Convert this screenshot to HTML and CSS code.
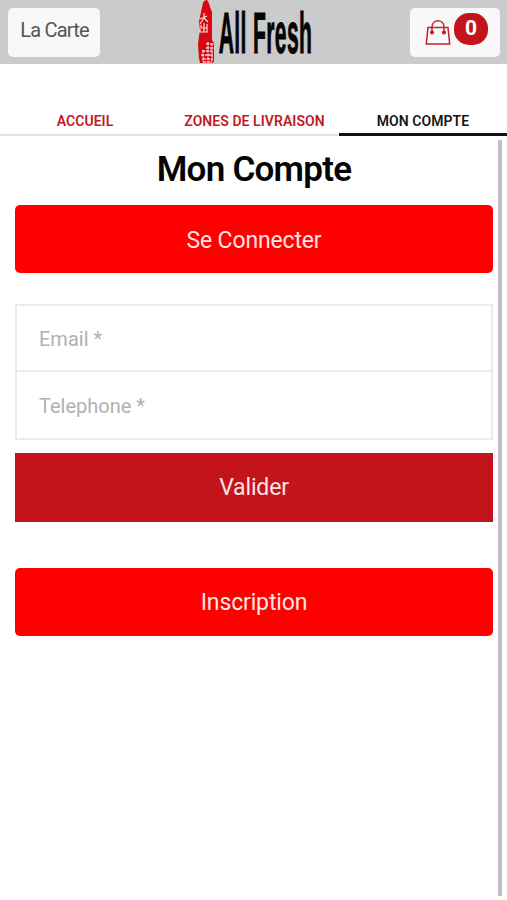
FILE: index.html
```html
<!DOCTYPE html>
<html lang="fr">
<head>
<meta charset="utf-8">
<meta name="viewport" content="width=device-width, initial-scale=1">
<title>All Fresh</title>
<link rel="stylesheet" href="styles.css">
</head>
<body>
<header class="topbar">
  <button class="menu-btn">La Carte</button>
  <svg class="logo" width="116" height="64" viewBox="0 0 116 64" role="img" aria-label="All Fresh">
    <path d="M8 3Q9 0 12 0Q14 2 15 7L17 12V40L19 43V61L18 63H5L4 58L3 45L4 36L5 30L4 22L6 12Z" fill="#d90712"/>
    <path d="M9 13V18M5 19L12 16M9 18L5 24M9 18L13 22M9 23V32M6 25V28H12V24M5 29V32H12V28" fill="none" stroke="#f8e0e0" stroke-width="1.2"/>
    <path d="M13 42V62M17 43V61M11 44H19M11 48H19M8 50V62M7 51H18M6 55H18M8 59H18M8 62H17" fill="none" stroke="#f4d4d5" stroke-width="1.3" stroke-dasharray="3 .8"/>
    <g transform="scale(.37 1)">
      <text class="logo-text" x="64" y="53" textLength="252" lengthAdjust="spacing">All Fresh</text>
    </g>
  </svg>
  <button class="cart-btn">
    <svg width="26" height="28" viewBox="0 0 26 28" fill="none" stroke="#c4222a" stroke-width="1.5">
      <path d="M3 8.5H23L24.7 25H1.3ZM7 13V8C7 -.5 19 -.5 19 8V13"/>
      <circle cx="7" cy="13.5" r="1.3" fill="#c4222a"/><circle cx="19" cy="13.5" r="1.3" fill="#c4222a"/>
    </svg>
    <span class="badge">0</span>
  </button>
</header>
<nav class="tabs">
  <a class="tab"><span>ACCUEIL</span></a>
  <a class="tab"><span>ZONES DE LIVRAISON</span></a>
  <a class="tab active"><span>MON COMPTE</span></a>
</nav>
<main class="content">
  <h1>Mon Compte</h1>
  <button class="action">Se Connecter</button>
  <form class="form">
    <input class="field" type="text" placeholder="Email *">
    <input class="field" type="text" placeholder="Telephone *">
    <button class="submit" type="button">Valider</button>
  </form>
  <button class="action last">Inscription</button>
</main>
</body>
</html>
```
FILE: styles.css
```css
* { box-sizing: border-box; }
body {
  margin: 0;
  height: 900px;
  overflow: hidden;
  background: #fff;
  font-family: Roboto, "Liberation Sans", sans-serif;
  display: flex;
  flex-direction: column;
}
button { border: 0; margin: 0; padding: 0; font-family: inherit; }
.topbar {
  height: 64px;
  flex: none;
  background: #cbcbcb;
  display: grid;
  grid-template-columns: 92px 116px 90px;
  column-gap: 95px;
  padding: 0 7px 0 8px;
}
.menu-btn, .cart-btn {
  height: 49px;
  margin-top: 8px;
  background: #f8f8f8;
  border-radius: 5px;
}
.menu-btn { font-size: 20px; letter-spacing: -0.8px; color: #555; padding: 0 0 5px 1px; }
.logo { display: block; overflow: visible; }
.logo-text { font: bold 57px "Liberation Sans", sans-serif; fill: #050505; stroke: #050505; stroke-width: 1; }
.cart-btn { display: flex; align-items: flex-start; margin-left: 4px; width: 90px; padding: 5px 0 0 15px; gap: 3px; }
.cart-btn svg { margin-top: 6px; }
.badge {
  width: 34px;
  height: 32px;
  border-radius: 15px;
  background: #c4141b;
  color: #fff;
  font-size: 21px;
  font-weight: 700;
  line-height: 31px;
  text-align: center;
}
.tabs { height: 72px; flex: none; display: grid; grid-template-columns: 170px 169px 168px; }
.tab {
  display: flex;
  align-items: flex-end;
  justify-content: center;
  padding-bottom: 4px;
  border-bottom: 2px solid #e4e4e4;
  color: #c4181f;
  font-size: 14px;
  font-weight: 600;
  line-height: 18px;
  letter-spacing: 0.06px;
  white-space: nowrap;
}
.tab.active { border-bottom: 3px solid #111; padding-bottom: 3px; color: #161616; }
.content {
  height: 756px;
  margin: 4px 5px 0 0;
  padding: 0 5px 0 15px;
  border-right: 4px solid #c1c1c1;
  display: flex;
  flex-direction: column;
}
h1 { margin: 10px 0 15px; font-size: 35px; line-height: 40px; font-weight: 600; text-align: center; color: #050505; letter-spacing: -0.75px; }
.action, .submit { height: 68px; flex: none; color: #ffe4e4; font-size: 23px; letter-spacing: -0.15px; background: #f00; padding-top: 2px; }
.action { border-radius: 5px; }
.action.last { padding-top: 0; }
.form { margin: 31px 0 46px; display: flex; flex-direction: column; }
.field {
  height: 68px;
  border: 2px solid #ebebeb;
  padding: 2px 22px 0;
  margin: 0;
  font: 20px Roboto, sans-serif;
  outline: 0;
  background: #fff;
}
.field + .field { border-top: 0; }
.field::placeholder { color: #b0b0b0; opacity: 1; }
.submit { margin-top: 13px; height: 69px; padding: 0; background: #c4141b; }
```
